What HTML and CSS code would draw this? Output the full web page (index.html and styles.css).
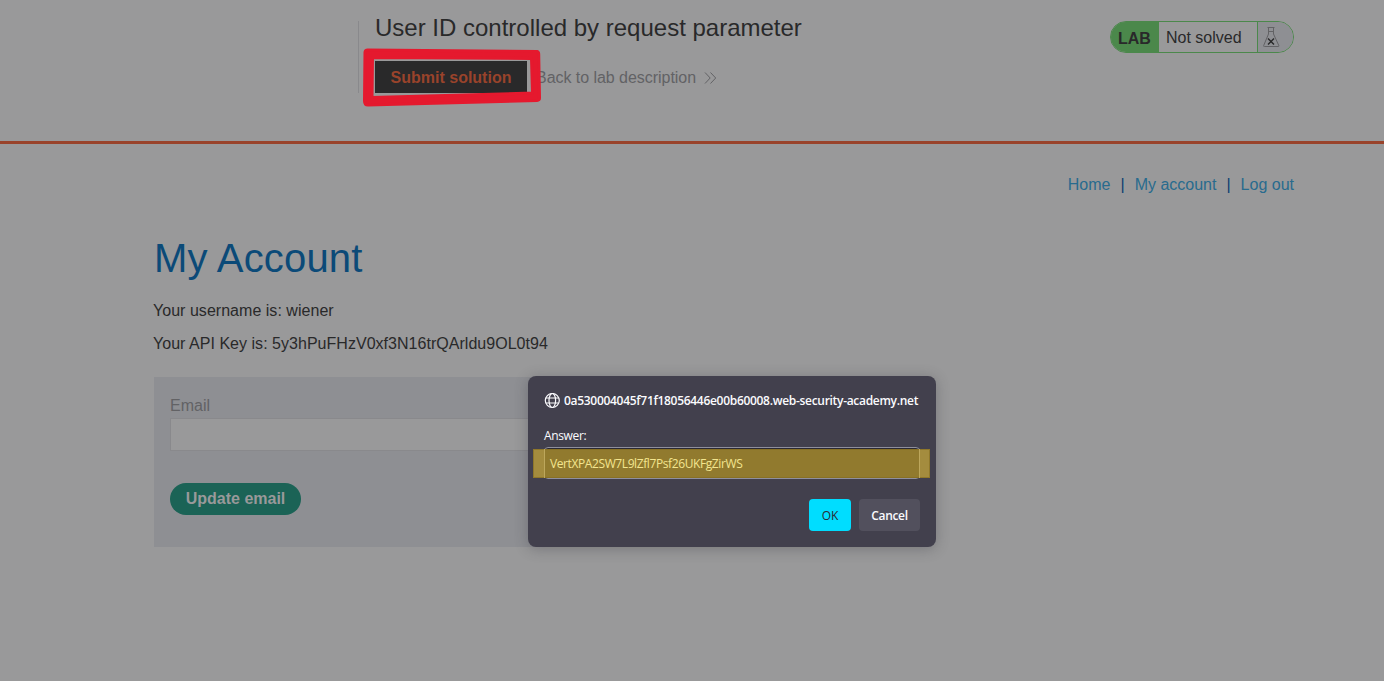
FILE: index.html
```
<!DOCTYPE html>
<html lang="en">
<head>
<meta charset="utf-8">
<title>User ID controlled by request parameter</title>
<link rel="stylesheet" href="styles.css">
</head>
<body>
<header class="lab-header">
  <div class="lab-title">
    <h2>User ID controlled by request parameter</h2>
    <div class="lab-actions">
      <button class="submit">Submit solution</button>
      <a class="back">Back to lab description
        <svg width="13" height="14" viewBox="0 0 13 14"><path d="M1 1.5 6.2 7 1 12.5M6.5 1.5 11.7 7 6.5 12.5"/></svg>
      </a>
    </div>
  </div>
  <div class="lab-status">
    <span class="lab-tag">LAB</span>
    <span class="lab-state">Not solved</span>
    <span class="lab-flask">
      <svg width="18" height="21" viewBox="0 0 18 21"><path class="glass" d="M4.500.5h7M5.500.5v6.500L.7 18.500q-.5 1 .8 1h13.500q1.300 0 .8-1L10.500 7V.5M5.500 4.500h5"/><path class="cross" d="m5 11.500 6 6m0-6-6 6"/></svg>
    </span>
  </div>
</header>
<main class="content">
  <nav class="nav"><a>Home</a><span>|</span><a>My account</a><span>|</span><a>Log out</a></nav>
  <h1>My Account</h1>
  <p>Your username is: wiener</p>
  <p>Your API Key is: 5y3hPuFHzV0xf3N16trQArldu9OL0t94</p>
  <form class="email-form">
    <label>Email</label>
    <input type="text">
    <button type="button" class="update">Update email</button>
  </form>
</main>
<section class="dialog">
  <div class="origin">
    <svg width="16" height="16" viewBox="0 0 16 16"><circle cx="8.300" cy="7.500" r="7"/><ellipse cx="8.300" cy="7.500" rx="3.300" ry="7"/><path d="M1.800 5h13M1.800 10h13"/></svg>
    <span>0a530004045f71f18056446e00b60008.web-security-academy.net</span>
  </div>
  <div class="question">Answer:</div>
  <div class="answer"><span>VertXPA2SW7L9lZfl7Psf26UKFgZirWS</span></div>
  <div class="buttons"><button class="ok">OK</button><button class="cancel">Cancel</button></div>
  <div class="marker"></div>
</section>
<svg class="red-frame" width="184" height="64" viewBox="360 46 184 64"><path fill-rule="evenodd" d="M367.500 50 537 51.500Q538.700 52 538.700 54L539.500 98Q539.500 100.300 537 100.400L368 105Q364.500 105 364.500 101L365 52Q365.500 50 367.500 50ZM372.500 57.500 372 97.500 532.500 93 531.500 58.500Z"/></svg>
</body>
</html>
```
FILE: styles.css
```
* { box-sizing: border-box; }
body {
  margin: 0;
  height: 681px;
  overflow: hidden;
  background: #99999a;
  color: #29292a;
  font: 16px/20px "Liberation Sans", Arial, sans-serif;
}
button { border: 0; font: inherit; }
h1, h2, p { margin: 0; font-weight: 400; }
.lab-header {
  display: flex;
  justify-content: space-between;
  align-items: flex-start;
  height: 144px;
  padding: 21px 90px 0 358px;
  border-bottom: 3px solid #99432b;
}
.lab-title {
  height: 72px;
  padding-left: 16px;
  border-left: 1px solid #89898c;
}
.lab-title h2 { font-size: 24px; line-height: 28px; margin-top: -7px; }
.lab-actions { display: flex; align-items: center; margin-top: 19px; }
.submit {
  width: 152px;
  height: 32px;
  padding: 2px 0 0;
  background: #29292a;
  color: #99432b;
  font-weight: 700;
}
.back { display: flex; align-items: center; margin: 2px 0 0 9px; color: #626265; letter-spacing: -.04px; }
.back svg { margin-left: 8px; fill: none; stroke: #626265; stroke-width: 1; }
.lab-status {
  display: flex;
  width: 184px;
  height: 32px;
  overflow: hidden;
  border: 1px solid #4b884b;
  border-radius: 16px;
  line-height: 31px;
}
.lab-tag {
  width: 48px;
  padding-left: 7px;
  background: #4b884b;
  font-weight: 700;
  line-height: 33px;
}
.lab-state { width: 98px; padding-left: 7px; }
.lab-flask { display: flex; flex: 1; padding: 5px 0 0 5px; border-left: 1px solid #4b884b; background: #8e8f93; }
.glass { fill: none; stroke: #626265; }
.cross { fill: none; stroke: #29292a; stroke-width: 1.400; }
.content { padding: 31px 90px 0 153px; }
.nav { display: flex; justify-content: flex-end; color: #286b8e; }
.nav span { margin: 0 10px; color: #0b3f70; }
h1 { margin-top: 39px; padding-left: 1px; font-size: 40px; line-height: 48px; letter-spacing: .18px; color: #0b4a78; }
.content p { margin-top: 13px; letter-spacing: .03px; }
.content h1 + p { margin-top: 19px; }
.email-form {
  display: flex;
  flex-direction: column;
  align-items: flex-start;
  width: 640px;
  height: 170px;
  margin: 23px 0 0 1px;
  padding: 19px 16px 0;
  background: #8e8f93;
}
.email-form label { color: #626265; }
.email-form input {
  width: 100%;
  height: 33px;
  margin-top: 2px;
  border: 1px solid #89898c;
  background: #99999a;
}
.update {
  width: 131px;
  height: 32px;
  margin-top: 32px;
  padding: 0;
  border-radius: 16px;
  background: #1b6356;
  color: #99999a;
  font-weight: 700;
}
.dialog {
  position: absolute;
  left: 528px;
  top: 376px;
  width: 408px;
  height: 171px;
  padding: 17px 16px 16px;
  border-radius: 8px;
  background: #42404d;
  box-shadow: 0 2px 14px rgba(40, 40, 50, .3);
  color: #fbfbfe;
  font: 12px/16px "Open Sans", "Noto Sans", sans-serif;
  white-space: nowrap;
}
.origin { display: flex; align-items: center; gap: 4px; font-weight: 600; letter-spacing: -.3px; }
.origin svg { flex: none; fill: none; stroke: #fbfbfe; stroke-width: 1.200; }
.question { margin-top: 19px; letter-spacing: -.35px; }
.answer {
  display: flex;
  align-items: center;
  width: 376px;
  height: 32px;
  margin-top: 3px;
  padding: 2px 0 0 5px;
  border: 1px solid #8f8f9d;
  border-radius: 4px;
  background: #2b2a33;
}
.answer span { position: relative; z-index: 2; color: #f3e58e; letter-spacing: -.4px; }
.buttons { display: flex; justify-content: flex-end; gap: 8px; margin-top: 20px; }
.buttons button { height: 32px; padding: 2px 0 0; border-radius: 4px; }
.buttons .ok { width: 42px; background: #00ddff; color: #2b2a33; }
.buttons .cancel { width: 61px; background: #52505d; color: #fbfbfe; font-weight: 600; letter-spacing: -.35px; }
.marker {
  position: absolute;
  left: 5px;
  top: 73px;
  width: 397px;
  height: 29px;
  border: 1px solid rgba(130, 105, 30, .6);
  background: linear-gradient(90deg, #a48c3e 10px, #917a2e 10px, #917a2e 386px, #a48c3e 386px);
}
.marker::after {
  content: "";
  position: absolute;
  inset: -1px 9px -1px 10px;
  border: solid #bda75c;
  border-width: 0 1px;
}
.red-frame { position: absolute; left: 360px; top: 46px; fill: #e5192e; stroke: #e5192e; stroke-width: 3; stroke-linejoin: round; }
```
